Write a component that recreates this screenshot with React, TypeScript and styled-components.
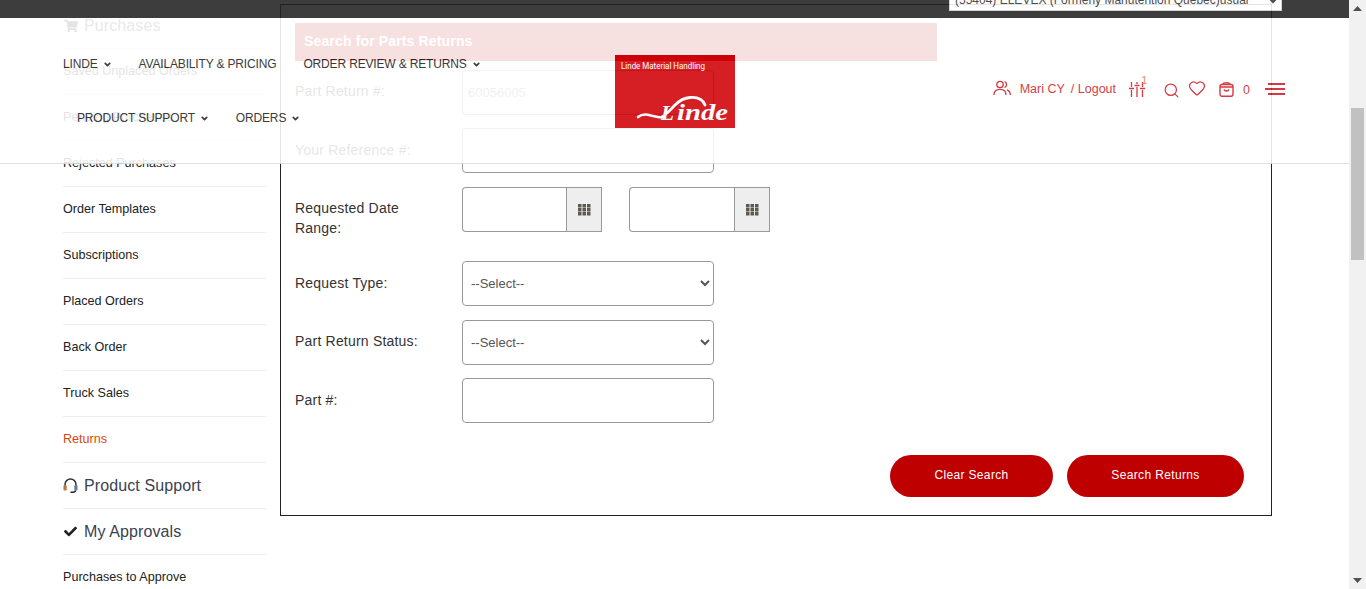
import React from 'react';
import styled, { createGlobalStyle } from 'styled-components';
import { ChevronDown, Search, Heart } from 'lucide-react';
import { FaShoppingCart, FaCheck } from 'react-icons/fa';

const GlobalStyle = createGlobalStyle`
  html, body {
    margin: 0;
    padding: 0;
    height: 100%;
    overflow: hidden;
    background: #fff;
    font-family: "Liberation Sans", Arial, sans-serif;
    color: #333;
  }
  * { box-sizing: border-box; }
`;

const Shell = styled.div`
  display: flex;
  height: 589px;
  width: 1366px;
`;

const Page = styled.div`
  position: relative;
  flex: 1;
  overflow: hidden;
`;

const Content = styled.main`
  display: flex;
  align-items: flex-start;
  gap: 13px;
  padding-left: 63px;
`;

/* sidebar */
const Sidebar = styled.nav`
  width: 204px;
  padding-top: 3px;
  flex: none;
`;

const SideRow = styled.a<{ $active?: boolean }>`
  display: flex;
  align-items: center;
  height: 46px;
  padding-bottom: 2px;
  font-size: 12.6px;
  color: ${p => (p.$active ? '#d9480f' : '#222')};
  border-bottom: 1px solid #eee;
`;

const SideHeading = styled(SideRow)`
  padding-bottom: 0;
  font-size: 16px;
  letter-spacing: 0.1px;
  color: #3a4250;
  gap: 6px;
`;

const SideIcon = styled.span`
  display: inline-flex;
  width: 15px;
  justify-content: center;
  color: #222;
`;

/* form panel */
const Panel = styled.section`
  width: 992px;
  height: 512px;
  margin-top: 4px;
  border: 1px solid #222;
  padding: 18px 27px 18px 14px;
  flex: none;
`;

const PanelTitle = styled.h2`
  width: 642px;
  height: 38px;
  margin: 0 0 9px;
  padding-left: 9px;
  background: #c00000;
  color: #fff;
  font-size: 14px;
  font-weight: bold;
  line-height: 37px;
  letter-spacing: 0.15px;
`;

const FieldRow = styled.div<{ $gap: number }>`
  display: flex;
  align-items: center;
  height: 45px;
  margin-bottom: ${p => p.$gap}px;
`;

const Label = styled.label<{ $offset: number }>`
  width: 167px;
  flex: none;
  font-size: 14px;
  line-height: 20px;
  letter-spacing: 0.2px;
  color: #333;
  padding-right: 30px;
  margin-top: ${p => p.$offset}px;
`;

const TextInput = styled.input`
  width: 252px;
  height: 45px;
  padding: 0 5px;
  border: 1px solid #999;
  border-radius: 4px;
  background: #fff;
  font: 13px "Liberation Sans", Arial, sans-serif;
  color: #888;
  outline: none;
`;

const Select = styled.select`
  width: 252px;
  height: 45px;
  padding: 0 4px;
  border: 1px solid #999;
  border-radius: 4px;
  background: #fff;
  font: 13px "Liberation Sans", Arial, sans-serif;
  color: #555;
  outline: none;
`;

const DateInput = styled.input`
  width: 104px;
  height: 45px;
  border: 1px solid #999;
  border-right: 0;
  border-radius: 4px 0 0 4px;
  background: #fff;
  outline: none;
`;

const DateGroup = styled.div`
  display: flex;
  height: 45px;
  & + & { margin-left: 27px; }
  & + & ${DateInput} { width: 105px; }
`;

const DateAddon = styled.button`
  display: flex;
  align-items: center;
  justify-content: center;
  width: 36px;
  height: 45px;
  padding: 0;
  border: 1px solid #999;
  background: #eee;
`;

const Actions = styled.div`
  display: flex;
  justify-content: flex-end;
  gap: 14px;
  margin-top: 32px;
`;

const PillButton = styled.button<{ $width: number }>`
  width: ${p => p.$width}px;
  height: 42px;
  border: 0;
  border-radius: 21px;
  background: #bf0000;
  color: #fff;
  font: 12px "Liberation Sans", Arial, sans-serif;
  letter-spacing: 0.35px;
  padding: 0 0 3px;
`;

/* fixed header laid over the scrolled page */
const Header = styled.header`
  position: absolute;
  top: 0;
  left: 0;
  right: 0;
  height: 164px;
  background: #fff;
  border-bottom: 1px solid #ddd;
  opacity: 0.88;
`;

const TopBar = styled.div`
  display: flex;
  justify-content: flex-end;
  height: 18px;
  padding-right: 67px;
  background: #232323;
  overflow: hidden;
`;

const AccountSelect = styled.select`
  width: 333px;
  height: 22px;
  margin-top: -11px;
  padding: 0 0 0 1px;
  border: 1px solid #ccc;
  background: #fff;
  color: #333;
  font: 12px "Liberation Sans", Arial, sans-serif;
  outline: none;
`;

const HeaderMain = styled.div`
  display: flex;
  align-items: flex-start;
  padding-right: 64px;
`;

const MainNav = styled.div`
  flex: none;
  width: 615px;
  padding-top: 37px;
`;

const NavRow = styled.div<{ $indent: number }>`
  display: flex;
  align-items: center;
  gap: 27px;
  height: 18px;
  margin-bottom: 36px;
  padding-left: ${p => p.$indent}px;
`;

const NavLink = styled.a`
  display: inline-flex;
  align-items: center;
  gap: 5px;
  font-size: 12px;
  letter-spacing: -0.16px;
  color: #222;
  white-space: nowrap;
`;

const Logo = styled.svg`
  display: block;
  flex: none;
  width: 120px;
  height: 73px;
  margin-top: 37px;
`;

const Tools = styled.div`
  display: flex;
  align-items: center;
  height: 30px;
  margin-top: 56px;
  margin-left: auto;
  color: #cf1f28;
`;

const ToolText = styled.span<{ $left: number; $size?: number; $drop?: number }>`
  margin-left: ${p => p.$left}px;
  margin-top: ${p => p.$drop ?? 0}px;
  font-size: ${p => p.$size ?? 12.5}px;
  white-space: nowrap;
`;

const ToolIcon = styled.span<{ $left: number; $drop?: number }>`
  position: relative;
  display: inline-flex;
  margin-left: ${p => p.$left}px;
  margin-top: ${p => p.$drop ?? 0}px;
`;

const Badge = styled.span`
  position: absolute;
  top: -6px;
  right: -2px;
  font-size: 10px;
  line-height: 10px;
  color: #f0703a;
`;

/* scrollbar */
const Scrollbar = styled.div`
  display: flex;
  flex-direction: column;
  align-items: center;
  width: 17px;
  flex: none;
  background: #f1f1f1;
`;

const ScrollArrow = styled.svg<{ $push?: boolean }>`
  display: block;
  width: 9px;
  height: 5px;
  margin-top: ${p => (p.$push ? 'auto' : '6px')};
  margin-bottom: ${p => (p.$push ? '6px' : '0')};
`;

const ScrollThumb = styled.div`
  width: 13px;
  height: 152px;
  margin-top: 97px;
  background: #c1c1c1;
`;

const sideItems = ['Saved Unplaced Orders', 'Pending Purchases', 'Rejected Purchases', 'Order Templates', 'Subscriptions', 'Placed Orders', 'Back Order', 'Truck Sales'];

const CalendarDots = () => (
  <svg width="13" height="12" viewBox="0 0 13 12" fill="#5f5850">
    {[0, 4.5, 9].flatMap(x => [0, 4, 8].map(y => <rect key={`${x}-${y}`} x={x} y={y} width="3.5" height="3.5" />))}
  </svg>
);

const HeadsetIcon = () => (
  <svg width="15" height="15" viewBox="0 0 15 15" fill="none">
    <path d="M2 8V6.500a5.500 5.500 0 0 1 11 0V8" stroke="#333" strokeWidth="1.5" />
    <rect x="0.500" y="7" width="3.200" height="5.500" rx="1.200" fill="#b5793f" />
    <rect x="11.300" y="7" width="3.200" height="5.500" rx="1.200" fill="#5f7fa0" />
    <path d="M12.500 12.500c0 1.300-1.500 1.700-3 1.700H7.500" stroke="#222" strokeWidth="1.500" />
  </svg>
);

const NavChevron = () => <ChevronDown size={9} strokeWidth={4.5} />;

const App = () => (
  <>
    <GlobalStyle />
    <Shell>
      <Page>
        <Content>
          <Sidebar>
            <SideHeading>
              <SideIcon><FaShoppingCart size={14} /></SideIcon>
              Purchases
            </SideHeading>
            {sideItems.map(item => <SideRow key={item}>{item}</SideRow>)}
            <SideRow $active>Returns</SideRow>
            <SideHeading>
              <SideIcon><HeadsetIcon /></SideIcon>
              Product Support
            </SideHeading>
            <SideHeading>
              <SideIcon><FaCheck size={13} /></SideIcon>
              My Approvals
            </SideHeading>
            <SideRow>Purchases to Approve</SideRow>
          </Sidebar>

          <Panel>
            <PanelTitle>Search for Parts Returns</PanelTitle>
            <FieldRow $gap={13}>
              <Label $offset={-4}>Part Return #:</Label>
              <TextInput defaultValue="60056005" />
            </FieldRow>
            <FieldRow $gap={14}>
              <Label $offset={-2}>Your Reference #:</Label>
              <TextInput />
            </FieldRow>
            <FieldRow $gap={29}>
              <Label $offset={17}>Requested Date Range:</Label>
              <DateGroup>
                <DateInput />
                <DateAddon><CalendarDots /></DateAddon>
              </DateGroup>
              <DateGroup>
                <DateInput />
                <DateAddon><CalendarDots /></DateAddon>
              </DateGroup>
            </FieldRow>
            <FieldRow $gap={14}>
              <Label $offset={-2}>Request Type:</Label>
              <Select><option>--Select--</option></Select>
            </FieldRow>
            <FieldRow $gap={13}>
              <Label $offset={-4}>Part Return Status:</Label>
              <Select><option>--Select--</option></Select>
            </FieldRow>
            <FieldRow $gap={0}>
              <Label $offset={-2}>Part #:</Label>
              <TextInput />
            </FieldRow>
            <Actions>
              <PillButton $width={163}>Clear Search</PillButton>
              <PillButton $width={177}>Search Returns</PillButton>
            </Actions>
          </Panel>
        </Content>

        <Header>
          <TopBar>
            <AccountSelect>
              <option>(55404) ELEVEX (Formerly Manutention Québec)usual</option>
            </AccountSelect>
          </TopBar>
          <HeaderMain>
            <MainNav>
              <NavRow $indent={63}>
                <NavLink>LINDE <NavChevron /></NavLink>
                <NavLink>AVAILABILITY &amp; PRICING</NavLink>
                <NavLink>ORDER REVIEW &amp; RETURNS <NavChevron /></NavLink>
              </NavRow>
              <NavRow $indent={77}>
                <NavLink>PRODUCT SUPPORT <NavChevron /></NavLink>
                <NavLink>ORDERS <NavChevron /></NavLink>
              </NavRow>
            </MainNav>

            <Logo viewBox="0 0 120 73">
              <rect width="120" height="73" fill="#d10008" />
              <text x="6" y="14" fontFamily="Roboto, sans-serif" fontSize="9" fill="#fff" textLength="84" lengthAdjust="spacingAndGlyphs">Linde Material Handling</text>
              <path d="M23 62c3-2.500 8-2.800 12-1.800 5 1.300 10 3 15 2" fill="none" stroke="#fff" strokeWidth="2.600" strokeLinecap="round" />
              <path d="M47 62c5-3 9-8 13-12 5-5 9-7 15-7.500 7-.5 13 2 15 7.500" fill="none" stroke="#fff" strokeWidth="2.800" strokeLinecap="round" />
              <text y="65" fontFamily="Liberation Serif, serif" fontWeight="bold" fontStyle="italic" fill="#fff">
                <tspan x="46" fontSize="21">L</tspan>
                <tspan x="62" fontSize="24" textLength="51" lengthAdjust="spacingAndGlyphs">inde</tspan>
              </text>
            </Logo>

            <Tools>
              <ToolIcon $left={0} $drop={-2}>
                <svg width="18" height="16" viewBox="0 0 18 16" fill="none" stroke="currentColor" strokeWidth="1.300">
                  <circle cx="7" cy="4.500" r="3.200" />
                  <path d="M1 15c0-4 2.500-5.600 6-5.600S13 11 13 15" />
                  <path d="M11.500 1.500a3.200 3.200 0 0 1 0 6M14 9.800c2 .7 3.300 2.400 3.300 5.200" />
                </svg>
              </ToolIcon>
              <ToolText $left={9}>Mari CY</ToolText>
              <ToolText $left={6}>/ Logout</ToolText>
              <ToolIcon $left={13}>
                <svg width="16" height="15" viewBox="0 0 16 15" fill="none" stroke="currentColor" strokeWidth="1.300">
                  <path d="M2.500 0v5M2.500 8v7M8 0v2M8 5v10M13.500 0v5M13.500 8v7M0 6.500h5M5.500 3.500h5M11 6.500h5" />
                </svg>
                <Badge>1</Badge>
              </ToolIcon>
              <ToolIcon $left={18} $drop={3}><Search size={17} strokeWidth={1.7} /></ToolIcon>
              <ToolIcon $left={8} $drop={-2}><Heart size={18} strokeWidth={1.7} /></ToolIcon>
              <ToolIcon $left={13} $drop={1}>
                <svg width="15" height="15" viewBox="0 0 15 15" fill="none" stroke="currentColor" strokeWidth="1.400">
                  <rect x="1" y="2.500" width="13" height="11.800" rx="2" />
                  <path d="M4 2.500C4 1 5 .7 7.500 .7S11 1 11 2.500M1 5h13M5 7.500c.5 2 4.500 2 5 0" />
                </svg>
              </ToolIcon>
              <ToolText $left={9} $drop={2}>0</ToolText>
              <ToolIcon $left={15}>
                <svg width="20" height="14" viewBox="0 0 20 14" fill="none" stroke="currentColor" strokeWidth="1.800">
                  <path d="M3 2h17M0 7h20M3 12h17" />
                </svg>
              </ToolIcon>
            </Tools>
          </HeaderMain>
        </Header>
      </Page>

      <Scrollbar>
        <ScrollArrow viewBox="0 0 9 5"><path d="M4.500 0L9 5H0z" fill="#505050" /></ScrollArrow>
        <ScrollThumb />
        <ScrollArrow $push viewBox="0 0 9 5"><path d="M0 0h9L4.500 5z" fill="#505050" /></ScrollArrow>
      </Scrollbar>
    </Shell>
  </>
);

export default App;
